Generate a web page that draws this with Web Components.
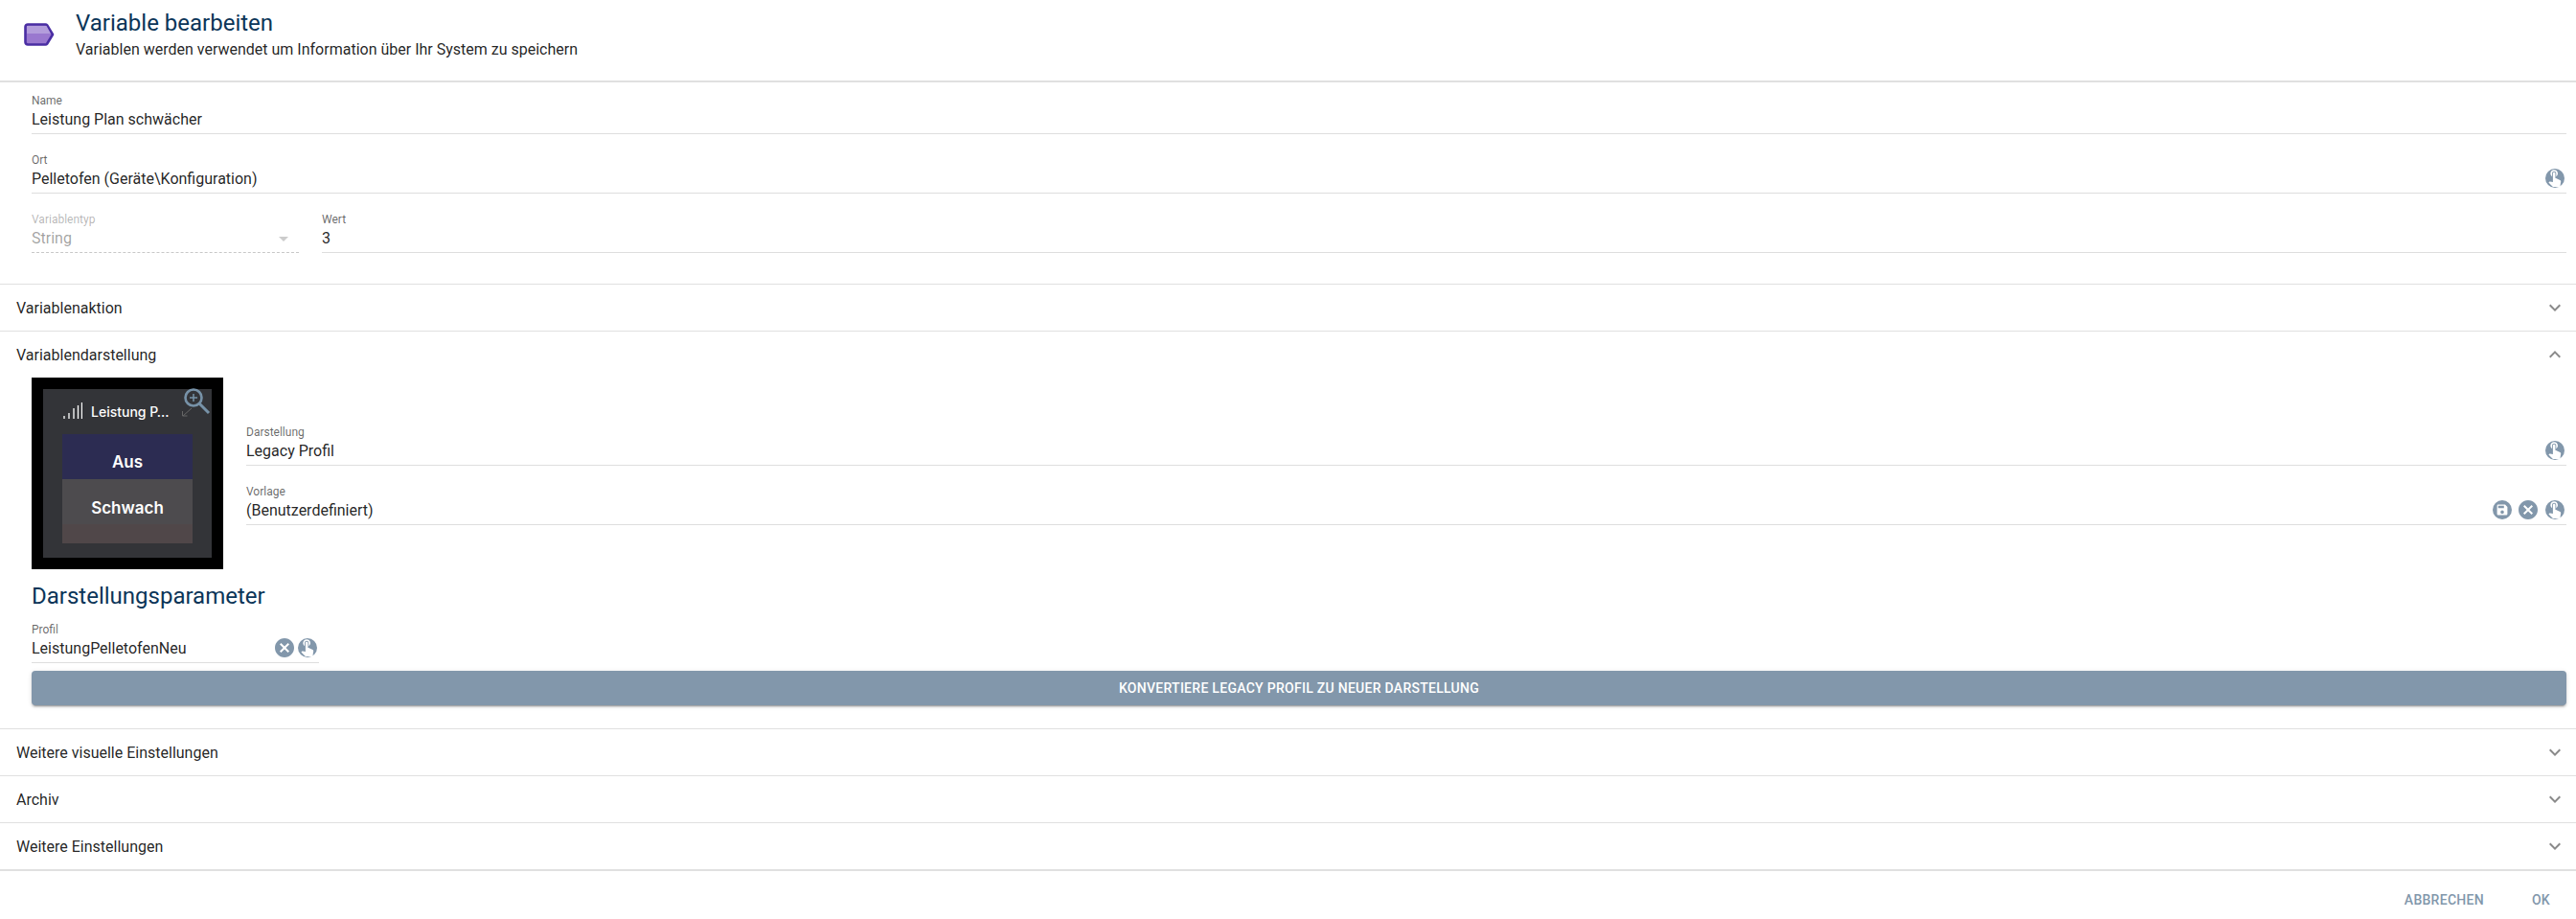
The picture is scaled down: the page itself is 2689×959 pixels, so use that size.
<!DOCTYPE html>
<html lang="de">
<head>
<meta charset="utf-8">
<title>Variable bearbeiten</title>
<style>
    html, body { margin: 0; height: 100%; background: #fff; overflow: hidden; }
    body { font-family: Roboto, "Liberation Sans", sans-serif; color: rgba(0,0,0,.87); }
    .form { display: block; padding: 6px 10px 32px 33px; }
    .fields { display: grid; gap: 14px; }
    .row { display: grid; grid-template-columns: 279px 1fr; gap: 24px; }
    .profile { width: 300px; }
</style>
</head>
<body>

<script>
const ICONS = {
    touch: `<circle cx="12" cy="12" r="10" fill="#8297ab"/><g transform="translate(1.4 .6) scale(.85)"><path fill="#fff" d="M9 11.24V7.5C9 6.12 10.12 5 11.5 5S14 6.12 14 7.5v3.74c1.21-.81 2-2.18 2-3.74C16 5.01 13.99 3 11.5 3S7 5.01 7 7.5c0 1.56.79 2.93 2 3.74zm9.84 4.63l-4.54-2.26c-.17-.07-.35-.11-.54-.11H13v-6c0-.83-.67-1.5-1.5-1.5S10 6.67 10 7.5v10.74l-3.43-.72c-.08-.01-.15-.03-.24-.03-.31 0-.59.13-.79.33l-.79.8 4.94 4.94c.27.27.65.44 1.06.44h6.79c.75 0 1.33-.55 1.44-1.28l.75-5.27c.01-.07.02-.14.02-.2 0-.62-.38-1.16-.91-1.38z"/></g>`,
    clear: `<path fill="#8297ab" d="M12 2C6.47 2 2 6.47 2 12s4.47 10 10 10 10-4.47 10-10S17.53 2 12 2zm5 13.59L15.59 17 12 13.41 8.41 17 7 15.59 10.59 12 7 8.41 8.41 7 12 10.59 15.59 7 17 8.41 13.41 12 17 15.59z"/>`,
    save: `<circle cx="12" cy="12" r="10" fill="#8297ab"/><g transform="translate(4.8 4.8) scale(.6)"><path fill="#fff" d="M15 9H5V5h10m-3 14a3 3 0 0 1-3-3 3 3 0 0 1 3-3 3 3 0 0 1 3 3 3 3 0 0 1-3 3m5-16H5a2 2 0 0 0-2 2v14a2 2 0 0 0 2 2h14a2 2 0 0 0 2-2V7l-4-4z"/></g>`
};

class RoundIcon extends HTMLElement {
    connectedCallback() {
        this.attachShadow({ mode: 'open' });
        this.shadowRoot.innerHTML = `
        <style>
            :host { display: block; width: 24px; height: 24px; }
            svg { display: block; }
        </style>
        <svg width="24" height="24" viewBox="0 0 24 24">${ICONS[this.getAttribute('name')]}</svg>`;
    }
}

class PageHeader extends HTMLElement {
    connectedCallback() {
        this.attachShadow({ mode: 'open' });
        this.shadowRoot.innerHTML = `
        <style>
            :host {
                display: flex;
                align-items: center;
                height: 84px;
                border-bottom: 2px solid #e0e0e0;
                padding-left: 25px;
                gap: 22px;
            }
            svg { display: block; flex: none; margin-top: -13px; }
            .text { margin-top: -13px; }
            h1 { margin: 0; font: 400 24px/32px Roboto, sans-serif; color: #0b3558; }
            p { margin: 0; font: 400 16px/24px Roboto, sans-serif; color: rgba(0,0,0,.87); }
        </style>
        <svg width="32" height="24" viewBox="0 0 32 24">
            <path d="M4 1.5h18.5a2 2 0 0 1 1.6.8L30 12l-5.9 9.7a2 2 0 0 1-1.6.8H4a2.5 2.5 0 0 1-2.5-2.5V4A2.5 2.5 0 0 1 4 1.5z" fill="#9a78cf" stroke="#4a2ea3" stroke-width="2.6" stroke-linejoin="round"/>
            <path d="M3 3h20.5l4.4 8H3z" fill="#b39ddb"/>
        </svg>
        <div class="text">
            <h1>${this.getAttribute('title')}</h1>
            <p>${this.getAttribute('subtitle')}</p>
        </div>`;
    }
}

class TextField extends HTMLElement {
    connectedCallback() {
        this.attachShadow({ mode: 'open' });
        this.shadowRoot.innerHTML = `
        <style>
            :host { display: block; min-width: 0; font-family: Roboto, sans-serif; }
            .box {
                height: 48px;
                box-sizing: border-box;
                padding-top: 6px;
                border-bottom: 1px solid #dedede;
            }
            :host([disabled]) .box { border-bottom: 1px dashed #c8c8c8; }
            label { display: block; font-size: 12px; line-height: 14px; color: rgba(0,0,0,.6); margin-bottom: 3px; }
            :host([disabled]) label { color: rgba(0,0,0,.3); }
            .line { display: flex; align-items: center; height: 20px; gap: 4px; }
            .value { flex: 1; font-size: 16px; line-height: 20px; white-space: nowrap; color: rgba(0,0,0,.87); }
            :host([disabled]) .value { color: rgba(0,0,0,.38); }
            .tail { display: flex; margin-top: -2px; }
            .arrow { width: 0; height: 0; border: 5px solid transparent; border-top-color: rgba(0,0,0,.2); border-bottom: 0; margin-right: 7px; }
        </style>
        <div class="box">
            <label>${this.getAttribute('label')}</label>
            <div class="line">
                <span class="value">${this.getAttribute('value')}</span>
                ${this.hasAttribute('select') ? '<span class="arrow"></span>' : ''}
                <span class="tail"><slot></slot></span>
            </div>
        </div>`;
    }
}

class CollapseSection extends HTMLElement {
    connectedCallback() {
        this.attachShadow({ mode: 'open' });
        const open = this.hasAttribute('open');
        const d = open ? 'M12 8l-6 6 1.41 1.41L12 10.83l4.59 4.58L18 14z' : 'M16.59 8.59L12 13.17 7.41 8.59 6 10l6 6 6-6z';
        this.shadowRoot.innerHTML = `
        <style>
            :host { display: block; border-top: 1px solid #e0e0e0; font-family: Roboto, sans-serif; }
            :host([last]) { border-bottom: 2px solid #e0e0e0; }
            .head {
                display: flex;
                align-items: center;
                justify-content: space-between;
                height: 48px;
                padding: 0 10px 0 17px;
                font-size: 16px;
            }
            svg { display: block; }
            .body { padding: 0 10px 0 33px; }
        </style>
        <div class="head">
            <span>${this.getAttribute('title')}</span>
            <svg width="24" height="24" viewBox="0 0 24 24"><path fill="#8a8a8a" d="${d}"/></svg>
        </div>
        ${open ? '<div class="body"><slot></slot></div>' : ''}`;
    }
}

class PreviewTile extends HTMLElement {
    connectedCallback() {
        this.attachShadow({ mode: 'open' });
        this.shadowRoot.innerHTML = `
        <style>
            :host {
                display: block;
                flex: none;
                width: 200px;
                height: 200px;
                box-sizing: border-box;
                padding: 12px;
                background: #000;
                position: relative;
                font-family: Inter, "Open Sans", sans-serif;
            }
            .tile {
                height: 176px;
                box-sizing: border-box;
                padding: 7px 20px 0 20px;
                background: #333438;
                color: #fff;
            }
            .title { display: flex; align-items: center; height: 32px; gap: 9px; margin-bottom: 8px; font-size: 14px; font-weight: 500; white-space: nowrap; }
            .title svg { display: block; margin-left: 1px; }
            .opt { display: flex; justify-content: center; font-size: 17px; line-height: 20px; font-weight: 600; }
            .off { height: 47px; padding-top: 19px; box-sizing: border-box; background: #2c2c52; }
            .low {
                height: 67px;
                padding-top: 20px;
                box-sizing: border-box;
                background: linear-gradient(#4d4b4e 0 47px, #504749 47px);
            }
            .arrow { position: absolute; left: 156px; top: 31px; }
            .zoom { position: absolute; left: 156px; top: 10px; }
        </style>
        <div class="tile">
            <div class="title">
                <svg width="20" height="18" viewBox="0 0 20 18"><path stroke="#fff" stroke-width="1.3" fill="none" d="M1 17v-3M6 17v-6M11 17V6M15.5 17V3M19.5 17V0"/></svg>
                <span>Leistung P…</span>
            </div>
            <div class="opt off">Aus</div>
            <div class="opt low">Schwach</div>
        </div>
        <svg class="arrow" width="12" height="10" viewBox="0 0 12 10"><path stroke="#666" stroke-width="1" fill="none" d="M11 1L2 9M1.5 4v5h5"/></svg>
        <svg class="zoom" width="32" height="32" viewBox="0 0 32 32">
            <circle cx="13" cy="11" r="8.5" fill="none" stroke="#7792a8" stroke-width="2.6"/>
            <path stroke="#7792a8" stroke-width="3" d="M19.5 17.5L29 27"/>
            <path stroke="#7792a8" stroke-width="1.5" d="M13 7v8M9 11h8"/>
        </svg>`;
    }
}

class ActionButton extends HTMLElement {
    connectedCallback() {
        this.attachShadow({ mode: 'open' });
        this.shadowRoot.innerHTML = `
        <style>
            :host { display: block; font-family: Roboto, sans-serif; }
            button {
                display: block;
                width: 100%;
                height: 36px;
                border: 0;
                border-radius: 4px;
                background: #8297ab;
                color: #fff;
                font: 500 14px/20px Roboto, sans-serif;
                letter-spacing: .28px;
                text-transform: uppercase;
                box-shadow: 0 3px 1px -2px rgba(0,0,0,.2), 0 2px 2px 0 rgba(0,0,0,.14), 0 1px 5px 0 rgba(0,0,0,.12);
            }
        </style>
        <button><slot></slot></button>`;
    }
}

class DialogFooter extends HTMLElement {
    connectedCallback() {
        this.attachShadow({ mode: 'open' });
        this.shadowRoot.innerHTML = `
        <style>
            :host {
                display: flex;
                justify-content: flex-end;
                gap: 50px;
                padding: 20px 27px 0 0;
                font: 500 14px/20px Roboto, sans-serif;
                letter-spacing: .28px;
                color: #8297ab;
            }
        </style>
        <span>ABBRECHEN</span><span>OK</span>`;
    }
}

customElements.define('round-icon', RoundIcon);
customElements.define('page-header', PageHeader);
customElements.define('text-field', TextField);
customElements.define('collapse-section', CollapseSection);
customElements.define('preview-tile', PreviewTile);
customElements.define('action-button', ActionButton);
customElements.define('dialog-footer', DialogFooter);
</script>

<page-header title="Variable bearbeiten" subtitle="Variablen werden verwendet um Information über Ihr System zu speichern"></page-header>

<div class="form">
    <div class="fields">
        <text-field label="Name" value="Leistung Plan schwächer"></text-field>
        <text-field label="Ort" value="Pelletofen (Geräte\Konfiguration)"><round-icon name="touch"></round-icon></text-field>
        <div class="row">
            <text-field label="Variablentyp" value="String" select disabled></text-field>
            <text-field label="Wert" value="3"></text-field>
        </div>
    </div>
</div>

<collapse-section title="Variablenaktion"></collapse-section>

<collapse-section title="Variablendarstellung" open>
    <div style="display:flex;gap:24px;align-items:center">
        <preview-tile></preview-tile>
        <div class="fields" style="flex:1;padding-bottom:2px">
            <text-field label="Darstellung" value="Legacy Profil"><round-icon name="touch"></round-icon></text-field>
            <text-field label="Vorlage" value="(Benutzerdefiniert)">
                <round-icon name="save"></round-icon><round-icon name="clear" style="margin:0 4px 0 3px"></round-icon><round-icon name="touch"></round-icon>
            </text-field>
        </div>
    </div>
    <div style="font:400 24px/32px Roboto,sans-serif;color:#0b3558;padding:12px 0 6px">Darstellungsparameter</div>
    <text-field class="profile" label="Profil" value="LeistungPelletofenNeu">
        <round-icon name="clear"></round-icon><round-icon name="touch"></round-icon>
    </text-field>
    <action-button style="margin:8px 0 24px">Konvertiere Legacy Profil zu neuer Darstellung</action-button>
</collapse-section>

<collapse-section title="Weitere visuelle Einstellungen"></collapse-section>
<collapse-section title="Archiv"></collapse-section>
<collapse-section title="Weitere Einstellungen" last></collapse-section>

<dialog-footer></dialog-footer>
</body>
</html>
